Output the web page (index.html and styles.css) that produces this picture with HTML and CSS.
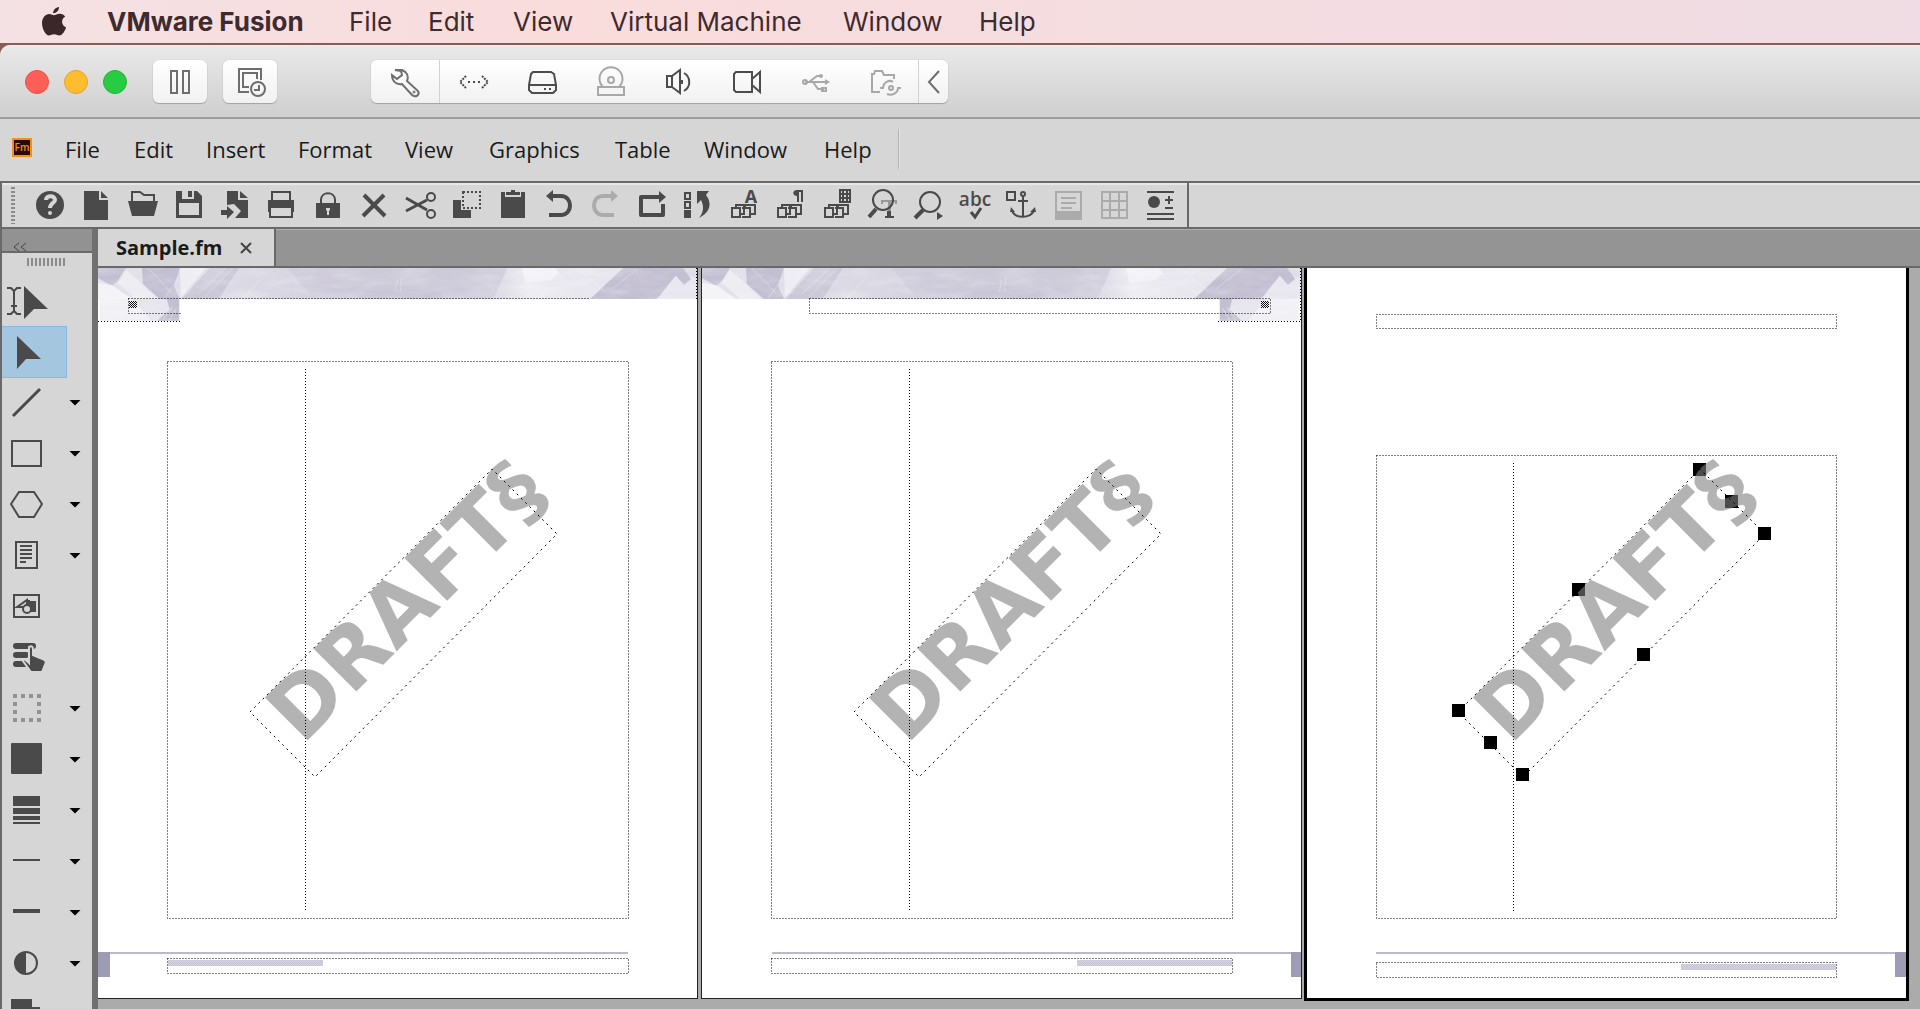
FILE: index.html
```html
<!DOCTYPE html>
<html lang="en">
<head>
<meta charset="utf-8">
<title>Sample.fm</title>
<link rel="stylesheet" href="styles.css">
</head>
<body>
<svg class="defs" aria-hidden="true">
  <defs>
    <linearGradient id="wash" x1="0" x2="1" y1="0" y2="0">
      <stop offset="0" stop-color="#e4e2eb"/><stop offset=".3" stop-color="#d9d7e2"/><stop offset=".42" stop-color="#cfccda"/><stop offset=".62" stop-color="#cfccda"/><stop offset=".72" stop-color="#edecf2"/><stop offset="1" stop-color="#dddbe6"/>
    </linearGradient>
    <filter id="grain" x="0" y="0" width="1" height="1">
      <feTurbulence type="fractalNoise" baseFrequency=".03 .12" numOctaves="3" seed="4"/>
      <feColorMatrix values="0 0 0 0 1  0 0 0 0 1  0 0 0 0 1  1.6 0 0 0 -.6"/>
    </filter>
    <pattern id="hatch" width="2" height="2" patternUnits="userSpaceOnUse"><path d="M0 0h1v1H0zM1 1h1v1H1z" fill="#111"/></pattern>
    <pattern id="tint" width="2" height="2" patternUnits="userSpaceOnUse"><path d="M0 0h2v2H0z" fill="#d6d5e0"/><path d="M0 0h1v1H0zM1 1h1v1H1z" fill="#c3c1d2"/></pattern>
    <symbol id="band" viewBox="0 0 600 31">
      <path d="M0 0h600v31H0z" fill="url(#wash)"/>
      <path d="M0 0h28l-9 14-5 4-14-8z" fill="#c3bfd2"/>
      <path d="M0 15l14 2 20 14H0z" fill="#f4f4f7"/>
      <path d="M28 2l14 12 18 17H38L20 15z" fill="#edecf2"/>
      <path d="M44 0h38l-6 18 6 13H62L45 16z" fill="#c3bfd2"/>
      <path d="M112 0h29l-20 31H84z" fill="#cbc8d8"/>
      <path d="M82 0h26L83 30z" fill="#eeedf3"/>
      <path d="M190 0h220l-14 31H216z" fill="#cbc8d8" opacity=".6"/>
      <path d="M258 31q14-12 30-9 16-4 32-5 24 4 28 14z" fill="#c6c3d4" opacity=".6"/>
      <path d="M425 0h42l-13 12-26 3z" fill="#f3f2f6"/>
      <path d="M458 0h15l38 31h-28z" fill="#e8e6ef"/>
      <path d="M526 0h50l12 14-29 17h-66z" fill="#c3bfd2"/>
      <path d="M580 6l20 4v21h-40z" fill="#e8e6ef"/>
      <path d="M572 0h14l8 11-7 6z" fill="#c3bfd2"/>
      <g stroke="#f7f6fa" fill="none" opacity=".35"><path d="M50 0l24 25M100 26l28-26M107 29l28-29M66 31l14-20M145 31l18-20M470 4l30 27M480 0l28 24M515 21l25-20M298 23l2-11M303 23l1-13"/></g>
      <path d="M0 0h600v31H0z" filter="url(#grain)" opacity=".3"/>
    </symbol>
    <symbol id="corner" viewBox="0 0 83 23">
      <path d="M0 0h83v23H0z" fill="#e6e4ed"/><path d="M0 0h34l20 23H0z" fill="#f1f0f5"/>
      <path d="M70 0h13v23H60l13-12z" fill="#c3bfd2"/><path d="M66 22l10-14M72 23l8-13" stroke="#ddd"/>
      <path d="M0 0h83v23H0z" filter="url(#grain)" opacity=".3"/>
    </symbol>
  </defs>
</svg>

<nav class="mac-menu" aria-label="System menu">
  <button aria-label="Apple"><svg width="26" height="32" viewBox="0 0 26 32"><path fill="#3b2629" d="M18 1c.3 3-2.600 6.300-5.800 6.200C11.900 4.300 14.800 1.200 18 1zM13 9.300c1.500 0 3-1.600 5.800-1.600 2.300 0 4.300 1.200 5.400 2.900-4.600 2.700-3.900 9 .9 10.900-1 3-3.700 8-6.900 8-2 0-2.800-1.200-5.100-1.200-2.400 0-3.300 1.200-5.200 1.200C4.500 29.500 1 22.500 1 17.300c0-5.600 3.500-9.300 7.200-9.300 2.300 0 3.500 1.300 4.800 1.300z"/></svg></button>
  <button class="strong">VMware Fusion</button>
  <button>File</button><button>Edit</button><button>View</button><button>Virtual Machine</button><button>Window</button><button>Help</button>
</nav>

<div class="window">
<header class="titlebar">
  <div class="lights">
    <button class="light red" aria-label="Close"></button><button class="light yellow" aria-label="Minimize"></button><button class="light green" aria-label="Zoom"></button>
  </div>
  <div class="vm-pair">
    <button class="vm" aria-label="Suspend"><svg width="54" height="42" viewBox="0 0 54 42"><path d="M18 10h6v22h-6zM30 10h6v22h-6z"/></svg></button>
    <button class="vm" aria-label="Snapshots"><svg width="54" height="42" viewBox="0 0 54 42"><path d="M26 31H16V8h22v11M26 26h-6V12h14v6"/><circle cx="35" cy="28" r="7"/><path d="M36 24v5h-5"/></svg></button>
  </div>
  <div class="vm-group">
    <button aria-label="Settings"><svg width="46" height="42" viewBox="0 0 46 42"><path d="M13 9l7 0c5 2 7 6 5 11l11 10c2 4-2 7-6 4L20 23c-6 1-10-3-10-9l5 4 5-4-1-4z"/><circle cx="32" cy="31" r=".5"/></svg></button>
    <div class="devices">
      <button aria-label="Network"><svg class="dark" width="46" height="42" viewBox="0 0 46 42"><path d="M15 15l-6 6 6 6M31 15l6 6-6 6" stroke-dasharray="2 1"/><path d="M17 21h14" stroke-dasharray="2 3"/></svg></button>
      <button aria-label="Hard disk"><svg class="dark" width="46" height="42" viewBox="0 0 46 42"><path d="M14 11h18l3 2 2 11v5l-3 3H13l-3-3v-5l2-11zM10 24h26"/><path d="M25 28h2M30 28h2"/></svg></button>
      <button aria-label="CD/DVD"><svg class="pale" width="46" height="42" viewBox="0 0 46 42"><path d="M15 26a11.500 11.500 0 1 1 16 0M10 26h26v8H10z"/><circle cx="23" cy="19" r="3"/></svg></button>
      <button aria-label="Sound"><svg class="dark" width="46" height="42" viewBox="0 0 46 42"><path d="M11 15h5v11h-5zM16 15l8-6v23l-8-6M26 19v4M28 12c7 4 7 14 0 18"/></svg></button>
      <button aria-label="Camera"><svg class="dark" width="46" height="42" viewBox="0 0 46 42"><path d="M12 11h16v20H12l-2-2V13zM28 18l8-7v20l-8-7"/></svg></button>
      <button aria-label="USB"><svg class="pale" width="46" height="42" viewBox="0 0 46 42"><path d="M12 21h21M16 21l8-6h4M20 21l5 7h6"/><path d="M32 18l5 3-5 3z" fill="#a8a8a8" stroke="none"/><circle cx="12" cy="21" r="2"/><circle cx="28" cy="15" r="1"/><path d="M29 27h4v3h-4z"/></svg></button>
      <button aria-label="Shared folders"><svg class="pale" width="46" height="42" viewBox="0 0 46 42"><path d="M19 31H11V13h2l1-3h7l2 4h10v4M19 27h3c0-5 6-9 10-6M40 27h-3c0 5-6 8-11 6"/><circle cx="30" cy="27" r="2"/></svg></button>
    </div>
    <button aria-label="Collapse"><svg width="28" height="42" viewBox="0 0 28 42"><path d="M19 10L9 21l10 11"/></svg></button>
  </div>
</header>

<nav class="app-menu" aria-label="Application menu">
  <svg width="20" height="19" viewBox="0 0 20 19"><path d="M1 1h18v17H1z" fill="#2b0907" stroke="#f29111" stroke-width="2"/><text class="logo-text" x="10" y="13" text-anchor="middle" fill="#f29111">Fm</text></svg>
  <button>File</button><button>Edit</button><button>Insert</button><button>Format</button><button>View</button><button>Graphics</button><button>Table</button><button>Window</button><button>Help</button>
  <span class="menu-end"></span>
</nav>

<div class="toolbar" role="toolbar" aria-label="Quick access">
  <span class="grip"></span>
  <div class="tools">
    <button aria-label="Help"><svg viewBox="-23 -22 46 44"><circle r="14"/><path class="cut" d="M-4-5c0-5 9-5 9 0 0 3-5 3-5 8"/><circle class="light-fill" cy="8" r="2"/></svg></button>
    <button aria-label="New"><svg viewBox="-23 -22 46 44"><path d="M-12-14H3v9h9v20h-24zM5-14l7 7H5z"/></svg></button>
    <button aria-label="Open"><svg viewBox="-23 -22 46 44"><path d="M-15-4h30l-4 15h-22z"/><path class="line" d="M-11-4v-9h8l4 3h10v6"/></svg></button>
    <button aria-label="Save"><svg viewBox="-23 -22 46 44"><path fill-rule="evenodd" d="M-13-14h6v8H5v-8h3l5 5v22h-26zM-10-2v12h20V-2zM-1-14h4v6h-4z"/></svg></button>
    <button aria-label="Import"><svg viewBox="-23 -22 46 44"><path d="M-8-14H3v9h10v18H0l6-7L-1-1l-7 1zM5-14l8 7H5zM-14 5h6V1l7 6-7 7v-4h-6z"/></svg></button>
    <button aria-label="Print"><svg viewBox="-23 -22 46 44"><path d="M-13-5h26V7h-3V1h-20v6h-3z"/><path class="line" d="M-9-5v-8H9v8M-11 2h22v10h-22z"/></svg></button>
    <button aria-label="Lock"><svg viewBox="-23 -22 46 44"><path d="M-12-2h24v15h-24z"/><path class="line" d="M-7-2v-3c0-9 14-9 14 0v3"/><path class="light-fill" d="M-2 3h4v2l-1 1v4h-2V6l-1-1z"/></svg></button>
    <button aria-label="Delete"><svg viewBox="-23 -22 46 44"><path class="thick" d="M-10-10l21 21M10-10L-11 11"/></svg></button>
    <button aria-label="Cut"><svg viewBox="-23 -22 46 44"><path class="line wide" d="M-14-7L7 5M-14 6L7-5"/><circle class="line" cx="11" cy="-8" r="4"/><circle class="line" cx="11" cy="9" r="4"/></svg></button>
    <button aria-label="Copy"><svg viewBox="-23 -22 46 44"><path d="M-14-5h8V5H4v8h-18z"/><path class="line" stroke-dasharray="2 2" d="M-4-13h17V3H-4z"/></svg></button>
    <button aria-label="Paste"><svg viewBox="-23 -22 46 44"><path d="M-12-13h4v5H8v-5h4v26h-24zM-7-13h5v-2h4v2h5v3H-7z"/></svg></button>
    <button aria-label="Undo"><svg viewBox="-23 -22 46 44"><path class="thick" d="M-8-9h10c12 0 12 19 0 19h-12"/><path d="M-13-9l7-6V-3z"/></svg></button>
    <button aria-label="Redo" disabled><svg viewBox="-23 -22 46 44"><path class="thick" d="M8-9H-2c-12 0-12 19 0 19H9"/><path d="M13-9l-7-6V-3z"/></svg></button>
    <button aria-label="Repeat"><svg viewBox="-23 -22 46 44"><path class="thick" stroke-linejoin="round" d="M8-8h-19v18h22V-1"/><path d="M14-8l-7-6V-2z"/></svg></button>
    <button aria-label="Replace"><svg viewBox="-23 -22 46 44"><path class="line" d="M-13-12h5v6h-5zM-13-3h5v6h-5z"/><path d="M-14 5h7v8h-7zM-1-14h12L8-10c6 8 5 17-7 23C6 7 6 1 3-5l-4 4z"/></svg></button>
    <button aria-label="Character catalog"><svg viewBox="-23 -22 46 44"><path class="line" d="M-12 3h8v9h-8zM-8 3V0h8v9h-4M-2 3h8v9h-8M1 3V0h10v9H6"/><text x="7" y="-2" text-anchor="middle">A</text></svg></button>
    <button aria-label="Paragraph catalog"><svg viewBox="-23 -22 46 44"><path class="line" d="M-12 3h8v9h-8zM-8 3V0h8v9h-4M-2 3h8v9h-8M1 3V0h10v9H6"/><path d="M13-15v12h-2v-10H9v10H7v-6c-5 0-5-6 0-6z"/></svg></button>
    <button aria-label="Table catalog"><svg viewBox="-23 -22 46 44"><path class="line" d="M-12 3h8v9h-8zM-8 3V0h8v9h-4M-2 3h8v9h-8M1 3V0h10v9H6"/><path class="line" d="M3-15h10v12H3zM2-11h12M2-7h12M6-15v12M10-15v12"/></svg></button>
    <button aria-label="Find text"><svg viewBox="-23 -22 46 44"><path fill="#999" d="M-2-5h16v4h-2v-2H8v14h3v2H2v-2h3V-3H0v2h-2z"/><path d="M4 6h4v5h3v2H2v-2h2z"/><circle class="line" cy="-5" r="10"/><path class="thick" d="M-7 4l-7 8"/></svg></button>
    <button aria-label="Find next"><svg viewBox="-23 -22 46 44"><circle class="line" cx="1" cy="-3" r="10"/><path class="thick" d="M-6 5l-8 8"/><path d="M8 7l6 4-6 4z"/></svg></button>
    <button aria-label="Spelling"><svg viewBox="-23 -22 46 44"><text class="abc" x="-1" y="1" text-anchor="middle">abc</text><path class="line wide" d="M-5 7l4 5 6-9"/></svg></button>
    <button aria-label="Anchored frame"><svg viewBox="-23 -22 46 44"><path class="line" d="M-15-13h8v8h-8zM1-8v20M-4-4H6M-10 5c1 9 20 9 22 0"/><circle class="line" cx="1" cy="-11" r="2"/><path d="M-12 7l1-5 4 5zM14 7l-1-5-5 5z"/></svg></button>
    <button aria-label="Footnote" disabled><svg viewBox="-23 -22 46 44"><path class="line" d="M-12-13h25v27h-25zM-7-7H8M-7-2H8M-7 3H4"/><path d="M-12 6h25v8h-25z"/></svg></button>
    <button aria-label="Insert table" disabled><svg viewBox="-23 -22 46 44"><path class="line" d="M-12-13h25v26h-25zM-12-4h25M-12 5h25M-4-13v26M5-13v26"/></svg></button>
    <button aria-label="Text format"><svg viewBox="-23 -22 46 44"><path class="line" d="M-14-13h27M-14 9h27M-14 14h27M4-5h8M8-9v8M4 3h8"/><circle cx="-7" cy="-3" r="6"/></svg></button>
  </div>
</div>

<div class="workspace">
  <aside class="side" aria-label="Graphics tools">
    <div class="side-head"><button aria-label="Collapse panel"><svg width="14" height="10" viewBox="0 0 14 10"><path d="M6 1L1 5l5 4M13 1L8 5l5 4"/></svg></button></div>
    <div class="side-grip"></div>
    <div class="tool"><button aria-label="Smart select"><svg viewBox="0 0 64 50"><path class="line" d="M5 12h4l3 3 3-3h4M12 15v20M5 38h4l3-3 3 3h4M9 30h6"/><path d="M22 10v33l10-10h14z"/></svg></button></div>
    <div class="tool active"><button aria-label="Object select"><svg viewBox="0 0 64 50"><path d="M15 9v33l9-10h15z"/></svg></button></div>
    <div class="tool"><button aria-label="Line"><svg viewBox="0 0 64 50"><path class="line wide" d="M11 38l27-27"/></svg></button><button class="more" aria-label="More lines"></button></div>
    <div class="tool"><button aria-label="Rectangle"><svg viewBox="0 0 64 50"><path class="line" d="M10 12h29v25H10z"/></svg></button><button class="more" aria-label="More rectangles"></button></div>
    <div class="tool"><button aria-label="Polygon"><svg viewBox="0 0 64 50"><path class="line" d="M9 24l8-12h15l8 12-8 13H17z"/></svg></button><button class="more" aria-label="More polygons"></button></div>
    <div class="tool"><button aria-label="Text frame"><svg viewBox="0 0 64 50"><path class="line" d="M14 11h21v26H14zM18 15h12M18 19h12M18 23h12M18 27h12M18 31h6"/></svg></button><button class="more" aria-label="More text"></button></div>
    <div class="tool"><button aria-label="Image"><svg viewBox="0 0 64 50"><path class="line" d="M12 13h25v22H12zM15 25l10-7v7zM27 18v7"/><path d="M27 19h7v11h-6z"/><circle cx="25" cy="27" r="4" fill="#d6d6d6" stroke="#4a4a4a" stroke-width="2"/></svg></button></div>
    <div class="tool"><button aria-label="Hotspot"><svg viewBox="0 0 64 50"><path class="thick round" d="M14 13h17M14 22h10M14 31h9"/><path class="halo" d="M27 14c3-2 4 0 4 3v5l7 3c3 1 5 1 6 4l-4 10H29L21 28c1-3 3-1 6 2z"/></svg></button></div>
    <div class="tool"><button aria-label="Frame"><svg viewBox="0 0 64 50"><path d="M11 10h4v4h-4zm8 0h4v4h-4zm8 0h4v4h-4zm8 0h4v4h-4zM11 18h4v4h-4zm24 0h4v4h-4zM11 26h4v4h-4zm24 0h4v4h-4zM11 34h4v4h-4zm8 0h4v4h-4zm8 0h4v4h-4zm8 0h4v4h-4z" fill="#929292"/></svg></button><button class="more" aria-label="More frames"></button></div>
    <div class="tool"><button aria-label="Fill"><svg viewBox="0 0 64 50"><rect x="9" y="8" width="31" height="31" rx="1"/></svg></button><button class="more" aria-label="Fill options"></button></div>
    <div class="tool"><button aria-label="Pen pattern"><svg viewBox="0 0 64 50"><path d="M11 10h27v10H11zM11 22h27v6H11zM11 30h27v4H11zM11 36h27v2H11z"/></svg></button><button class="more" aria-label="Pen options"></button></div>
    <div class="tool"><button aria-label="Line width"><svg viewBox="0 0 64 50"><path d="M11 22h27v2H11z"/></svg></button><button class="more" aria-label="Width options"></button></div>
    <div class="tool"><button aria-label="Line style"><svg viewBox="0 0 64 50"><path d="M11 21h27v4H11z"/></svg></button><button class="more" aria-label="Style options"></button></div>
    <div class="tool"><button aria-label="Tint"><svg viewBox="0 0 64 50"><circle class="line" cx="24" cy="24" r="11"/><path d="M24 13a11 11 0 0 0 0 22z"/></svg></button><button class="more" aria-label="Tint options"></button></div>
    <div class="tool"><button aria-label="Overprint"><svg viewBox="0 0 64 50"><path d="M9 9h21v8h8v20H18v-8H9z"/></svg></button></div>
  </aside>

  <main class="document">
    <div class="tabs"><div class="tab"><button>Sample.fm</button><button aria-label="Close tab"><svg width="12" height="12" viewBox="0 0 12 12"><path d="M1 1l10 10M11 1L1 11"/></svg></button></div></div>
    <div class="pages">
      <svg class="page" width="599" height="730" viewBox="98 268 599 730">
        <use href="#band" x="98" y="268" width="599" height="31"/>
        <use href="#corner" x="98" y="299" width="83" height="22"/>
        <path fill="url(#hatch)" d="M129 301h8v7h-8z"/>
        <path class="rule" d="M98 953h530"/><path class="block" d="M98 952h12v25H98z"/>
        <path fill="url(#tint)" d="M168 960h155v6H168z"/>
        <text class="draft" transform="translate(308 740) rotate(-45)" x="-8">DRAFT§</text>
        <path class="dots" d="M128.500 313.500H181M128.500 298.500v15M128.500 298.500H590M98 321.500h83M696.500 268v31M167.500 361.500h461v557h-461zM305.500 369v542M167.500 958.500h461v15h-461z"/>
        <path class="dots slant" d="M250 712l242-243 65 65-242 243z"/>
      </svg>
      <svg class="page" width="599" height="730" viewBox="702 268 599 730">
        <use href="#band" x="702" y="268" width="599" height="31"/>
        <g transform="translate(2519 0) scale(-1 1)"><use href="#corner" x="1218" y="299" width="83" height="22"/></g>
        <path fill="url(#hatch)" d="M1261 301h8v7h-8z"/>
        <path class="rule" d="M772 953h530"/><path class="block" d="M1291 952h11v25h-11z"/>
        <path fill="url(#tint)" d="M1077 960h155v6h-155z"/>
        <text class="draft" transform="translate(912 740) rotate(-45)" x="-8">DRAFT§</text>
        <path class="dots" d="M809.500 298.500h461v15h-461zM1218 321.500h83M1300.500 268v53M771.500 361.500h461v557h-461zM909.500 369v542M771.500 958.500h461v15h-461z"/>
        <path class="dots slant" d="M854 712l242-243 65 65-242 243z"/>
      </svg>
      <svg class="page current" width="599" height="730" viewBox="1307 268 599 730">
        <path class="rule" d="M1376 953h530"/><path class="block" d="M1895 952h11v25h-11z"/>
        <path fill="url(#tint)" d="M1681 964h155v6h-155z"/>
        <path class="handles" d="M1693 463h13v13h-13zM1725 495h13v13h-13zM1758 527h13v13h-13zM1572 583h13v13h-13zM1637 648h13v13h-13zM1452 704h13v13h-13zM1484 736h13v13h-13zM1516 768h13v13h-13z"/>
        <text class="draft" transform="translate(1516 740) rotate(-45)" x="-8">DRAFT§</text>
        <path class="dots" d="M1376.500 314.500h460v14h-460zM1376.500 455.500h460v463h-460zM1513.500 463v448M1376.500 962.500h460v15h-460z"/>
        <path class="dots slant" d="M1458 712l242-243 65 65-242 243z"/>
      </svg>
    </div>
  </main>
</div>
</div>
</body>
</html>
```
FILE: styles.css
```css
* { box-sizing: border-box; }
body { margin: 0; height: 100vh; display: flex; flex-direction: column; overflow: hidden; background: #8c5a54; color: #1a1a1a; font-family: "Open Sans", "Noto Sans", sans-serif; }
button { margin: 0; padding: 0; border: 0; background: none; font: inherit; color: inherit; text-align: left; white-space: nowrap; }
svg { display: block; }
.defs { position: absolute; width: 0; height: 0; }

.mac-menu { flex: none; height: 43px; display: grid; grid-template-columns: 66px 242px 79px 85px 97px 233px 136px 80px; padding-left: 41px; align-items: center; background: linear-gradient(90deg, #f4e1e4, #fadcdc 30%, #f4dde0 60%, #f0dce4); color: #3f2a2d; font: 26px/42px Inter, Roboto, sans-serif; }
.mac-menu .strong { font-weight: 700; }

.window { flex: 1; min-height: 0; margin-top: 2px; display: flex; flex-direction: column; overflow: hidden; border-radius: 10px 0 0 0; background: #d6d6d6; }
.titlebar { flex: none; height: 74px; display: flex; align-items: center; padding-left: 25px; background: linear-gradient(#e9e9e9, #cfcfcf); border-top: 1px solid #f6f6f6; border-bottom: 2px solid #9c9c9c; }
.lights { display: flex; gap: 15px; width: 128px; }
.light { width: 24px; height: 24px; border-radius: 50%; border: 1px solid; }
.red { background: #ff5f57; border-color: #e8504a; }
.yellow { background: #ffbd2e; border-color: #e2a33a; }
.green { background: #28cc41; border-color: #25b33b; }
.vm-pair { display: flex; gap: 16px; width: 218px; }
.vm, .vm-group { height: 43px; border-radius: 6px; background: linear-gradient(#ffffff, #f1f1f1); box-shadow: 0 1px 1px #a0a0a0, 0 0 1px #b0b0b0; }
.vm-group { display: flex; align-items: center; width: 577px; }
.vm-group button { flex: 1; display: flex; justify-content: center; }
.vm-group > button:first-child { flex: 0 0 68px; }
.vm-group > button:last-child { flex: 0 0 29px; }
.devices { flex: 1; display: flex; height: 43px; align-items: center; border: solid #d2d2d2; border-width: 0 1px; }
.titlebar svg { fill: none; stroke: #6e6e6e; stroke-width: 2; }
.titlebar svg.dark { stroke: #4c4c4c; }
.titlebar svg.pale { stroke: #a8a8a8; }

.app-menu { flex: none; height: 62px; display: grid; grid-template-columns: 53px 69px 72px 92px 107px 84px 126px 89px 120px 74px 2px; align-items: center; padding: 0 0 2px 12px; font-size: 22px; line-height: 32px; }
.app-menu > svg { margin-bottom: 4px; }
.logo-text { font: 600 10px "Open Sans", sans-serif; }
.menu-end { height: 40px; border-left: 1px solid #b4b4b4; border-right: 1px solid #e6e6e6; }

.toolbar { flex: none; height: 48px; display: flex; align-items: stretch; border: solid #696969; border-width: 2px 0 2px 2px; box-shadow: inset 0 2px #e8e8e8; }
.grip { width: 4px; margin: 4px 12px 3px 9px; background: repeating-linear-gradient(#8a8a8a 0 2px, #d6d6d6 2px 4px); }
.tools { width: 1162px; padding-right: 3px; display: grid; grid-template-columns: repeat(25, 1fr); border-right: 2px solid #696969; }
.tools svg { width: 46px; height: 44px; }
.tools svg, .side svg { fill: #4a4a4a; }
.tools text { font: 700 18px "Open Sans", sans-serif; }
.tools .abc { font: 600 19px "Open Sans", sans-serif; }
.tools button:disabled { opacity: .3; }
.line { fill: none; stroke: #4a4a4a; stroke-width: 2; }
.wide { stroke-width: 3; }
.thick { fill: none; stroke: #4a4a4a; stroke-width: 4; }
.round { stroke-width: 6; stroke-linecap: round; }
.cut { fill: none; stroke: #d6d6d6; stroke-width: 4; }
.light-fill { fill: #d6d6d6; }
.halo { stroke: #d6d6d6; stroke-width: 2; }

.workspace { flex: 1; min-height: 0; display: grid; grid-template-columns: 98px minmax(0, 1fr); }
.side { overflow: hidden; border-left: 2px solid #696969; border-right: 6px solid #707070; }
.side-head { height: 24px; padding: 6px 11px; background: #929292; border-bottom: 2px solid #696969; }
.side-head svg { fill: none; stroke: #444; stroke-width: 1; }
.side-grip { width: 38px; height: 8px; margin: 5px 0 9px 25px; background: repeating-linear-gradient(90deg, #8c8c8c 0 2px, #d6d6d6 2px 4px); }
.tool { height: 51px; display: flex; align-items: center; }
.tool svg { width: 64px; height: 50px; }
.tool.active { align-items: flex-end; }
.tool.active button { background: #a5c6df; outline: 1px solid #83b9e1; }
.more { width: 12px; height: 6px; margin-left: 3px; background: #000; clip-path: polygon(0 0, 100% 0, 50% 100%); }

.document { display: flex; flex-direction: column; min-height: 0; background: #ababab; }
.tabs { flex: none; height: 39px; display: flex; background: #949494; border-bottom: 2px solid #696969; box-shadow: inset 0 1px #b0b0b0; }
.tab { width: 178px; display: flex; align-items: center; justify-content: space-between; padding: 0 22px 0 18px; background: #d6d6d6; border-right: 2px solid #696969; font-size: 20px; font-weight: 700; line-height: 30px; }
.tab svg { stroke: #444; stroke-width: 2; }
.pages { flex: 1; min-height: 0; display: flex; align-items: flex-start; overflow: hidden; }
.page { flex: none; box-sizing: content-box; isolation: isolate; background: #fff; border: solid #222; border-width: 0 1px 1px 0; }
.page + .page { margin-left: 3px; border-left-width: 1px; }
.page.page.current { margin-left: 2px; border: solid #000; border-width: 0 3px 3px; }
.draft { font: 700 83px "DejaVu Sans", sans-serif; fill: #4c4c4c; mix-blend-mode: difference; }
.dots { fill: none; stroke: #000; stroke-width: 1; stroke-dasharray: 1 2; }
.slant { stroke-dasharray: 2 4; }
.rule { stroke: #bbb8cc; stroke-width: 2; }
.block { fill: #9d9cb4; }
.handles { fill: #000; }
```
